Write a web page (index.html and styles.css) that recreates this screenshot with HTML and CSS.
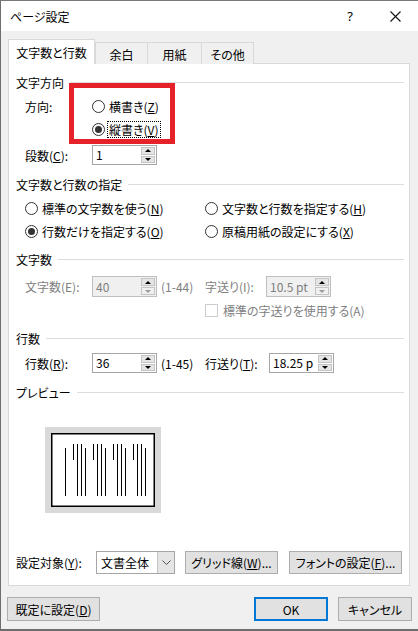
FILE: index.html
```html
<!DOCTYPE html>
<html lang="ja">
<head>
	<meta charset="utf-8">
	<title>ページ設定</title>
	<link rel="stylesheet" href="styles.css">
</head>
<body>
	<div class="window">
		<div class="titleBar">
			<span class="title">ページ設定</span>
			<span class="help">?</span>
			<svg class="close" width="11" height="11" viewBox="0 0 11 11"><path d="M0.5 0.5 L10.5 10.5 M10.5 0.5 L0.5 10.5" stroke="#111" stroke-width="1.1" fill="none"/></svg>
		</div>

		<div class="tabs">
			<div class="tab active">文字数と行数</div>
			<div class="tab">余白</div>
			<div class="tab">用紙</div>
			<div class="tab">その他</div>
		</div>

		<div class="panel">
			<div class="groupHead">文字方向</div>
			<div class="orient">
				<div class="row r23 indent">
					<span class="lbl">方向:</span>
					<span class="radio"></span><span class="rtext">横書き(<u>Z</u>)</span>
				</div>
				<div class="row r23 indent">
					<span class="lbl"></span>
					<span class="radio on"></span><span class="rtext focus">縦書き(<u>V</u>)</span>
				</div>
				<div class="highlight"></div>
			</div>
			<div class="row r20 indent mt4">
				<span class="lbl">段数(<u>C</u>):</span>
				<div class="spin">
					<span class="val">1</span>
					<span class="btns"><span class="up"></span><span class="down"></span></span>
				</div>
			</div>

			<div class="groupHead mt11">文字数と行数の指定</div>
			<div class="grid2 mt5">
				<div class="row r23"><span class="radio"></span><span class="rtext">標準の文字数を使う(<u>N</u>)</span></div>
				<div class="row r23"><span class="radio"></span><span class="rtext">文字数と行数を指定する(<u>H</u>)</span></div>
				<div class="row r23"><span class="radio on"></span><span class="rtext">行数だけを指定する(<u>O</u>)</span></div>
				<div class="row r23"><span class="radio"></span><span class="rtext">原稿用紙の設定にする(<u>X</u>)</span></div>
			</div>

			<div class="groupHead mt8">文字数</div>
			<div class="row r21 indent mt9 dim">
				<span class="lbl">文字数(E):</span>
				<div class="spin off">
					<span class="val">40</span>
					<span class="btns"><span class="up"></span><span class="down"></span></span>
				</div>
				<span class="range">(1-44)</span>
				<span class="lbl2">字送り(I):</span>
				<div class="spin off">
					<span class="val">10.5 pt</span>
					<span class="btns"><span class="up"></span><span class="down"></span></span>
				</div>
			</div>
			<div class="row r21 mt3 dim">
				<span class="check"></span><span class="ctext">標準の字送りを使用する(A)</span>
			</div>

			<div class="groupHead mt9">行数</div>
			<div class="row r20 indent mt7">
				<span class="lbl">行数(<u>R</u>):</span>
				<div class="spin">
					<span class="val">36</span>
					<span class="btns"><span class="up"></span><span class="down"></span></span>
				</div>
				<span class="range">(1-45)</span>
				<span class="lbl2 wide">行送り(<u>T</u>):</span>
				<div class="spin">
					<span class="val">18.25 p</span>
					<span class="btns"><span class="up"></span><span class="down"></span></span>
				</div>
			</div>

			<div class="groupHead mt11">プレビュー</div>
			<svg class="preview" width="116" height="86" viewBox="0 0 116 86">
				<rect x="0" y="0" width="116" height="86" fill="#d9d9d9"/>
				<rect x="6.75" y="6.75" width="102.5" height="72.5" fill="#fff" stroke="#000" stroke-width="1.5"/>
				<g stroke="#000" stroke-width="1">
					<path d="M20.5 21 V69"/>
					<path d="M28.5 17 V33 M32.5 17 V69 M36.5 17 V69 M40.5 21 V69"/>
					<path d="M48.5 17 V33 M52.5 17 V69 M56.5 17 V69 M60.5 21 V69"/>
					<path d="M68.5 17 V33 M72.5 17 V69 M76.5 17 V69 M80.5 21 V69"/>
					<path d="M88.5 17 V33 M92.5 17 V69 M96.5 17 V69 M100.5 21 V69"/>
				</g>
			</svg>

			<div class="row r23 applyRow">
				<span class="applyLbl">設定対象(<u>Y</u>):</span>
				<div class="select">
					<span class="selVal">文書全体</span>
					<span class="selBtn"><svg width="9" height="6" viewBox="0 0 9 6"><path d="M0.5 0.5 L4.5 4.5 L8.5 0.5" stroke="#555" fill="none"/></svg></span>
				</div>
				<button class="btn gridBtn">グリッド線(<u>W</u>)...</button>
				<button class="btn fontBtn">フォントの設定(<u>F</u>)...</button>
			</div>
		</div>

		<div class="footer">
			<button class="btn defBtn">既定に設定(<u>D</u>)</button>
			<span class="spacer"></span>
			<button class="btn okBtn">OK</button>
			<button class="btn cancelBtn">キャンセル</button>
		</div>
	</div>
</body>
</html>
```

FILE: styles.css
```css
* {
	box-sizing: border-box;
}

body {
	margin: 0;
	font-family: "Noto Sans CJK JP", "Noto Sans", sans-serif;
	font-size: 12px;
	font-feature-settings: "palt";
	color: #000;
}

u {
	text-decoration: underline;
	text-underline-offset: 1px;
}

div.window {
	width: 418px;
	height: 631px;
	background: #f0f0f0;
	border-top: 1px solid #7a7a7a;
	border-left: 1px solid #6e6e6e;
	border-bottom: 2px solid #6e6e6e;
	overflow: hidden;
}

div.titleBar {
	height: 30px;
	background: #fff;
	display: flex;
	align-items: center;
	margin-left: -1px;
	padding-left: 10px;
}

.title {
	flex: 1;
	font-size: 12px;
}

.help {
	font-family: "Noto Sans", sans-serif;
	font-size: 13px;
	margin-right: 37px;
}

.close {
	margin-right: 17px;
}

/* tab strip */
div.tabs {
	display: flex;
	align-items: flex-end;
	height: 33px;
	padding-left: 7px;
	margin-bottom: -1px;
	position: relative;
	z-index: 1;
}

div.tab {
	height: 22px;
	border: 1px solid #d9d9d9;
	border-bottom: none;
	background: #f0f0f0;
	display: flex;
	align-items: center;
	justify-content: center;
	margin-left: -1px;
	padding-top: 1px;
}

div.tab:nth-child(2) { width: 53px; }
div.tab:nth-child(3) { width: 55px; }
div.tab:nth-child(4) { width: 53px; }

div.tab.active {
	width: 87px;
	height: 25px;
	background: #fff;
	margin-left: 0;
	margin-right: 1px;
	padding-top: 0;
}

/* main panel */
div.panel {
	width: 402px;
	height: 523px;
	margin-left: 7px;
	background: #fff;
	border: 1px solid #d9d9d9;
	padding: 10px 5px 0 7px;
}

div.groupHead {
	height: 16px;
	display: flex;
	align-items: center;
	gap: 6px;
}

div.groupHead::after {
	content: "";
	flex: 1;
	height: 1px;
	background: #dcdcdc;
}

div.row {
	display: flex;
	align-items: center;
}

.r23 { height: 23px; }
.r21 { height: 21px; }
.r20 { height: 20px; }

.indent { padding-left: 9px; }

.mt3 { margin-top: 3px; }
.mt4 { margin-top: 4px; }
.mt5 { margin-top: 5px; }
.mt7 { margin-top: 7px; }
.mt8 { margin-top: 8px; }
.mt9 { margin-top: 9px; }
.mt11 { margin-top: 11px; }

div.orient {
	position: relative;
	margin-top: 5px;
}

div.highlight {
	position: absolute;
	left: 53px;
	top: -12px;
	width: 106px;
	height: 61px;
	border: 5px solid #e5222a;
}

.lbl {
	width: 67px;
	flex: none;
}

.lbl2 {
	width: 61px;
	flex: none;
}

.lbl2.wide { width: 64px; }

.range {
	width: 48px;
	flex: none;
	padding-left: 4px;
}

span.radio {
	width: 13px;
	height: 13px;
	border: 1px solid #333;
	border-radius: 50%;
	background: #fff;
	flex: none;
	display: flex;
	align-items: center;
	justify-content: center;
}

span.radio.on::after {
	content: "";
	width: 7px;
	height: 7px;
	border-radius: 50%;
	background: #333;
}

.rtext {
	margin-left: 4px;
	line-height: 15px;
}

.rtext.focus {
	outline: 1px dotted #000;
	outline-offset: 0;
	padding: 0 1px;
	margin-left: 3px;
}

div.grid2 {
	display: grid;
	grid-template-columns: 180px 1fr;
	padding-left: 9px;
}

/* spin boxes */
div.spin {
	width: 65px;
	height: 20px;
	border: 1px solid #a6a6a6;
	background: #fff;
	display: flex;
	flex: none;
}

div.spin .val {
	flex: 1;
	padding-left: 3px;
	line-height: 18px;
	white-space: nowrap;
}

span.btns {
	width: 15px;
	display: flex;
	flex-direction: column;
	padding: 1px 1px 1px 0;
	gap: 1px;
}

span.btns span {
	flex: 1;
	background: #e5e5e5;
	border: 1px solid #c4c4c4;
	display: flex;
	align-items: center;
	justify-content: center;
}

span.btns .up::after {
	content: "";
	border-left: 3px solid transparent;
	border-right: 3px solid transparent;
	border-bottom: 3px solid #000;
}

span.btns .down::after {
	content: "";
	border-left: 3px solid transparent;
	border-right: 3px solid transparent;
	border-top: 3px solid #000;
}

div.spin.off {
	background: #f0f0f0;
	border-color: #bfbfbf;
	height: 21px;
}

div.spin.off .val {
	color: #808080;
	line-height: 19px;
}

div.spin.off .down::after {
	border-top-color: #9a9a9a;
}

div.spin.off .down {
	background: #f0f0f0;
}

.dim {
	color: #808080;
}

span.check {
	width: 13px;
	height: 13px;
	border: 1px solid #cccccc;
	margin-left: 189px;
	flex: none;
}

.ctext {
	margin-left: 5px;
}

svg.preview {
	display: block;
	margin: 27px 0 0 29px;
}

/* bottom of panel */
div.applyRow {
	margin-top: 38px;
}

.applyLbl {
	width: 80px;
	flex: none;
}

div.select {
	width: 79px;
	height: 23px;
	border: 1px solid #a6a6a6;
	display: flex;
	flex: none;
}

.selVal {
	flex: 1;
	padding-left: 4px;
	line-height: 21px;
}

.selBtn {
	width: 17px;
	background: #e5e5e5;
	border-left: 1px solid #c4c4c4;
	display: flex;
	align-items: center;
	justify-content: center;
}

button.btn {
	font-family: inherit;
	font-size: 12px;
	font-feature-settings: "palt";
	background: #e1e1e1;
	border: 1px solid #adadad;
	height: 23px;
	padding: 0;
	color: #000;
}

.gridBtn {
	width: 93px;
	margin-left: 10px;
}

.fontBtn {
	width: 113px;
	margin-left: 11px;
}

/* dialog buttons */
div.footer {
	display: flex;
	padding: 11px 0 0 6px;
}

.spacer { flex: 1; }

.defBtn { width: 93px; }

.footer button.btn {
	height: 24px;
}

.okBtn {
	width: 74px;
	border: 2px solid #0078d7 !important;
}

.cancelBtn {
	width: 74px;
	margin: 0 6px 0 10px;
}
```
